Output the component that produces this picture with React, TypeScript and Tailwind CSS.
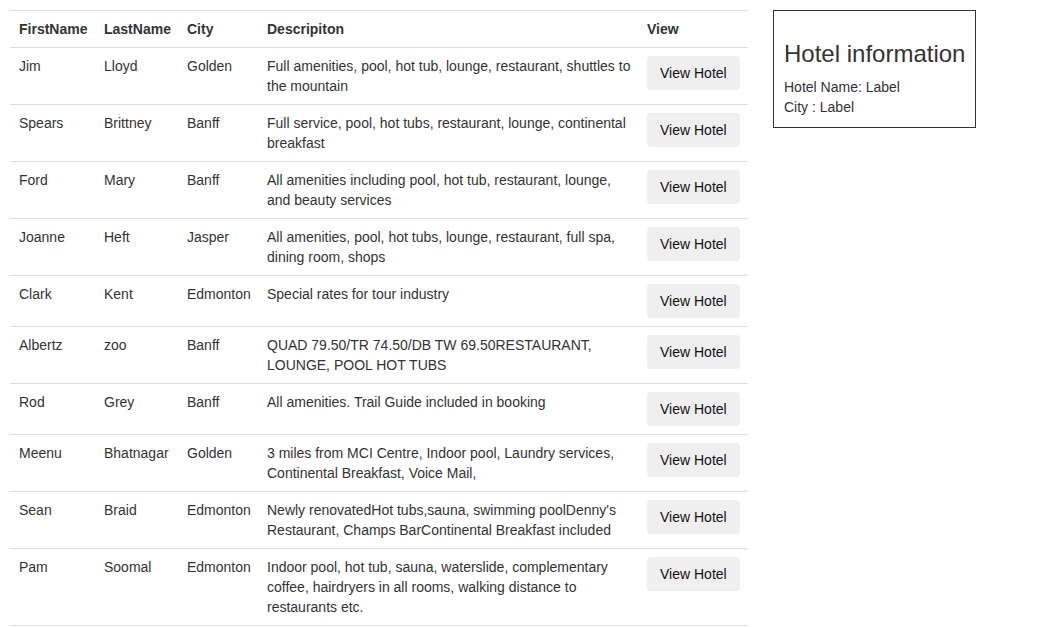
import React from "react";

type Hotel = {
  first: string;
  last: string;
  city: string;
  desc: string;
};

const hotels: Hotel[] = [
  { first: "Jim", last: "Lloyd", city: "Golden", desc: "Full amenities, pool, hot tub, lounge, restaurant, shuttles to the mountain" },
  { first: "Spears", last: "Brittney", city: "Banff", desc: "Full service, pool, hot tubs, restaurant, lounge, continental breakfast" },
  { first: "Ford", last: "Mary", city: "Banff", desc: "All amenities including pool, hot tub, restaurant, lounge, and beauty services" },
  { first: "Joanne", last: "Heft", city: "Jasper", desc: "All amenities, pool, hot tubs, lounge, restaurant, full spa, dining room, shops" },
  { first: "Clark", last: "Kent", city: "Edmonton", desc: "Special rates for tour industry" },
  { first: "Albertz", last: "zoo", city: "Banff", desc: "QUAD 79.50/TR 74.50/DB TW 69.50RESTAURANT, LOUNGE, POOL HOT TUBS" },
  { first: "Rod", last: "Grey", city: "Banff", desc: "All amenities. Trail Guide included in booking" },
  { first: "Meenu", last: "Bhatnagar", city: "Golden", desc: "3 miles from MCI Centre, Indoor pool, Laundry services, Continental Breakfast, Voice Mail," },
  { first: "Sean", last: "Braid", city: "Edmonton", desc: "Newly renovatedHot tubs,sauna, swimming poolDenny's Restaurant, Champs BarContinental Breakfast included" },
  { first: "Pam", last: "Soomal", city: "Edmonton", desc: "Indoor pool, hot tub, sauna, waterslide, complementary coffee, hairdryers in all rooms, walking distance to restaurants etc." },
];

const cell = "border-t border-[#ddd] p-2 align-top text-left";
const firstCell = "border-t border-[#ddd] py-2 pl-[9px] pr-2 align-top text-left";

export default function App() {
  return (
    <div className="flex items-start p-[10px] font-['Liberation_Sans',Arial,sans-serif] text-[14px] leading-[20px] text-[#333] bg-white min-h-screen">
      <table className="w-[738px] table-fixed border-collapse border-b border-[#ddd]">
        <colgroup>
          <col className="w-[86px]" />
          <col className="w-[83px]" />
          <col className="w-[80px]" />
          <col className="w-[380px]" />
          <col className="w-[109px]" />
        </colgroup>
        <thead>
          <tr>
            <th className={`${firstCell} font-bold`}>FirstName</th>
            <th className={`${cell} font-bold`}>LastName</th>
            <th className={`${cell} font-bold`}>City</th>
            <th className={`${cell} font-bold`}>Descripiton</th>
            <th className={`${cell} font-bold`}>View</th>
          </tr>
        </thead>
        <tbody>
          {hotels.map((h) => (
            <tr key={h.first + h.last}>
              <td className={firstCell}>{h.first}</td>
              <td className={cell}>{h.last}</td>
              <td className={cell}>{h.city}</td>
              <td className={cell}>{h.desc}</td>
              <td className={cell}>
                <button
                  type="button"
                  className="rounded-[4px] bg-[#efefef] px-[13px] py-[7px] text-[14px] leading-[20px] text-[#111] whitespace-nowrap"
                >
                  View Hotel
                </button>
              </td>
            </tr>
          ))}
        </tbody>
      </table>

      <div className="ml-[25px] border border-[#333] px-[10px] pb-[10px]">
        <h3 className="mt-[30px] mb-[10px] text-[24px] leading-[26px] font-normal whitespace-nowrap">
          Hotel information
        </h3>
        <div>Hotel Name: Label</div>
        <div>City : Label</div>
      </div>
    </div>
  );
}
